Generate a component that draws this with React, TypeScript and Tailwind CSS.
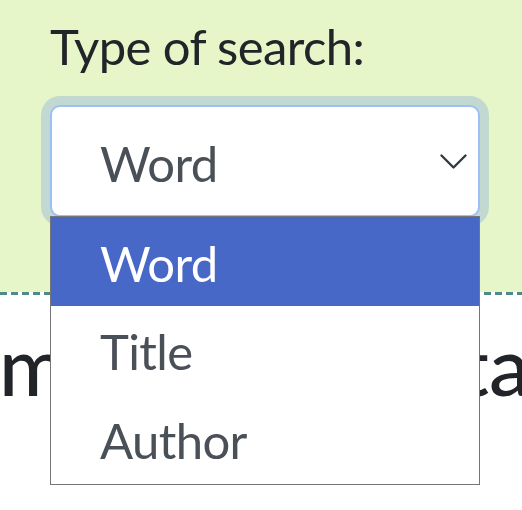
import { useState } from "react";

const options = ["Word", "Title", "Author"];

function Chevron() {
  return (
    <svg
      width="27"
      height="15"
      viewBox="0 0 27 15"
      fill="none"
      stroke="#343a40"
      strokeWidth="2.4"
      strokeLinecap="round"
      strokeLinejoin="round"
    >
      <path d="M1.5 1.5 13.5 13.5 25.5 1.5" />
    </svg>
  );
}

export default function App() {
  const [selected] = useState("Word");

  return (
    <div
      className="relative h-[510px] w-[522px] overflow-hidden bg-white text-[#212529]"
      style={{ fontFamily: "Lato, 'Open Sans', sans-serif" }}
    >
      <section className="h-[292px] bg-[#e6f6c8] pl-[50px] pt-[15px]">
        <label className="block h-[62px] text-[49px] leading-[62px] tracking-[-0.6px]">
          Type of search:
        </label>

        <div className="relative mt-[28px] w-[430px]">
          <div className="flex h-[112px] items-center justify-between rounded-[10px] border-2 border-[#9ebff5] bg-white pl-[48px] pr-[11px] text-[49px] tracking-[-0.6px] text-[#495057] shadow-[0_0_0_9px_#c2d9d1]">
            <span className="pt-[5px]">{selected}</span>
            <Chevron />
          </div>

          <ul className="absolute left-0 top-[111px] z-10 w-[430px] border border-[#767676] bg-white text-[49px] tracking-[-0.6px] text-[#495057]">
            {options.map((opt) => (
              <li
                key={opt}
                className={
                  opt === selected
                    ? "flex h-[89px] items-center bg-[#4868c8] pl-[49px] pt-[4px] text-white"
                    : "flex h-[89px] items-center pl-[49px] pt-[3px]"
                }
              >
                {opt}
              </li>
            ))}
          </ul>
        </div>
      </section>

      <div className="h-[3px] bg-[repeating-linear-gradient(90deg,#4f8a8b_0_7px,transparent_7px_11px)]" />

      <h1 className="flex justify-between whitespace-nowrap pt-[19px] text-[82px] font-medium leading-[100px]">
        <span className="-ml-[1px]">m</span>
        <span className="-mr-[8px]">ta</span>
      </h1>
    </div>
  );
}
